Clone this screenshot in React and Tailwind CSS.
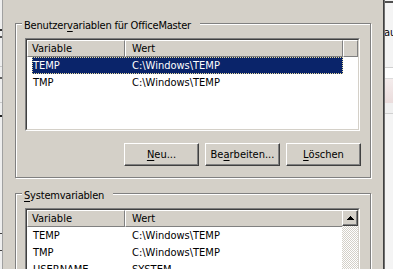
import React from "react";

function Button({ children }) {
  return (
    <div className="w-[75px] h-[23px] border border-t-white border-l-white border-b-[#404040] border-r-[#404040] shadow-[inset_-1px_-1px_0_#808080] flex items-center justify-center pb-[1px]">
      {children}
    </div>
  );
}

function HeaderCell({ w, pl, children, grow }) {
  return (
    <div
      className={
        (grow ? "flex-1 " : "") +
        w +
        " " +
        pl +
        " h-[17px] border-t border-l border-t-white border-l-white border-r border-r-[#808080] border-b border-b-[#808080] flex items-center shrink-0"
      }
    >
      {children}
    </div>
  );
}

function Row({ a, b, selected }) {
  return (
    <div className="h-[17px] flex pl-[5px]">
      <div
        className={
          "w-[311px] flex items-center " +
          (selected
            ? "bg-[#0a246a] text-white outline outline-1 outline-dotted outline-[#e8dc9c] -outline-offset-1"
            : "")
        }
      >
        <span className="w-[93px] pl-[1px] shrink-0">{a}</span>
        <span className="pl-[7px]">{b}</span>
      </div>
    </div>
  );
}

function ListView({ rows, scrollbar, h }) {
  return (
    <div className={"w-[335px] " + h + " border border-t-[#808080] border-l-[#808080] border-b-white border-r-white bg-white shrink-0"}>
      <div className="h-full border border-t-[#404040] border-l-[#404040] border-b-[#d4d0c8] border-r-[#d4d0c8] flex overflow-hidden">
        <div className="flex-1 flex flex-col min-w-0">
          <div className="flex bg-[#d4d0c8]">
            <HeaderCell w="w-[98px]" pl="pl-[4px]">Variable</HeaderCell>
            <HeaderCell w="w-[218px]" pl="pl-[6px]">Wert</HeaderCell>
            {!scrollbar && <HeaderCell grow w="" pl="" />}
          </div>
          {rows.map((r, i) => (
            <Row key={i} a={r[0]} b={r[1]} selected={r[2]} />
          ))}
        </div>
        {scrollbar && (
          <div className="w-[16px] flex flex-col shrink-0">
            <div className="h-[16px] bg-[#d4d0c8] border border-t-white border-l-white border-b-[#404040] border-r-[#404040] shadow-[inset_-1px_-1px_0_#808080] flex items-center justify-center">
              <svg width="7" height="4" viewBox="0 0 7 4" className="mb-[1px]">
                <path d="M3 0h1v1h1v1h1v1h1v1H0V3h1V2h1V1h1z" fill="#000" />
              </svg>
            </div>
            <div className="flex-1 bg-[repeating-conic-gradient(#ffffff_0_25%,#d4d0c8_0_50%)] bg-[length:2px_2px]" />
          </div>
        )}
      </div>
    </div>
  );
}

function Group({ legend, children, h }) {
  return (
    <div className={"relative w-[356px] " + h + " border border-[#808080] shadow-[inset_1px_1px_0_#ffffff,1px_1px_0_#ffffff] pl-[9px] pt-[14px] shrink-0"}>
      <span className="absolute top-[-5px] left-[6px] bg-[#d4d0c8] pl-[2px] pr-[9px] leading-[13px] whitespace-nowrap tracking-[-0.2px]">
        {legend}
      </span>
      {children}
    </div>
  );
}

export default function App() {
  return (
    <div className="w-[393px] h-[269px] overflow-hidden flex bg-[#d4d0c8] text-black text-[11px] leading-[13px] font-['DejaVu_Sans_Condensed','Liberation_Sans',sans-serif]">
      <div className="w-[3px] h-full flex shrink-0">
        <div className="w-[2px] h-full bg-[#eeeeee] flex flex-col">
          <div className="h-[29px]" />
          <div className="h-[2px] bg-[#303030]" />
          <div className="h-[5px]" />
          <div className="h-[2px] bg-[#505050]" />
          <div className="h-[28px]" />
          <div className="h-[1px] bg-[#c8c8c8]" />
          <div className="h-[10px]" />
          <div className="h-[2px] bg-[#606060]" />
          <div className="h-[23px]" />
          <div className="h-[1px] bg-[#c8c8c8]" />
          <div className="h-[12px]" />
          <div className="h-[2px] bg-[#202020]" />
          <div className="h-[116px]" />
          <div className="h-[1px] bg-[#404040]" />
          <div className="h-[16px]" />
          <div className="h-[1px] bg-[#404040]" />
        </div>
        <div className="w-[1px] h-full bg-[#a0a0a0]" />
      </div>

      <div className="w-[380px] h-full shrink-0 pl-[12px] pt-[23px] flex flex-col">
        <Group
          h="h-[155px]"
          legend={
            <>
              Benutzer<span className="underline underline-offset-[2px]">v</span>ariablen für OfficeMaster
            </>
          }
        >
          <ListView
            h="h-[93px]"
            rows={[
              ["TEMP", "C:\\Windows\\TEMP", true],
              ["TMP", "C:\\Windows\\TEMP"],
            ]}
          />
          <div className="w-[336px] flex justify-end gap-[6px] mt-[12px]">
            <Button>
              <span className="underline underline-offset-[2px]">N</span>eu...
            </Button>
            <Button>
              Be<span className="underline underline-offset-[2px]">a</span>rbeiten...
            </Button>
            <Button>
              <span className="underline underline-offset-[2px]">L</span>öschen
            </Button>
          </div>
        </Group>
        <div className="h-[15px] shrink-0" />
        <Group
          h="h-[120px]"
          legend={
            <>
              <span className="underline underline-offset-[2px]">S</span>ystemvariablen
            </>
          }
        >
          <ListView
            h="h-[100px]"
            scrollbar
            rows={[
              ["TEMP", "C:\\Windows\\TEMP"],
              ["TMP", "C:\\Windows\\TEMP"],
              ["USERNAME", "SYSTEM"],
            ]}
          />
        </Group>
      </div>

      <div className="w-[1px] h-full bg-[#404040] shrink-0" />
      <div className="w-[1px] h-full bg-[#707070] shrink-0" />
      <div className="flex-1 h-full bg-[#f4f4f4] flex flex-col overflow-hidden">
        <div className="h-[1px]" />
        <div className="h-[2px] bg-[#505050]" />
        <div className="h-[23px]" />
        <div className="h-[13px] leading-[13px] -ml-[1px] whitespace-nowrap">au</div>
        <div className="h-[28px]" />
        <div className="h-[1px] bg-[#d0d0d0]" />
        <div className="h-[10px] bg-white" />
        <div className="h-[1px] bg-[#dcdcdc]" />
        <div className="h-[24px] bg-gradient-to-b from-[#f4ecec] to-[#eadcdc]" />
        <div className="h-[10px] bg-[#f0f0f0]" />
        <div className="h-[1px] bg-[#d0d0d0]" />
      </div>
    </div>
  );
}
